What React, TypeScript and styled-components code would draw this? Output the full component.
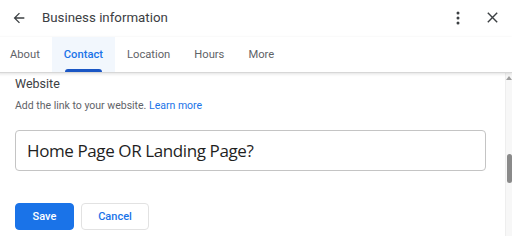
import styled, { createGlobalStyle } from "styled-components";

const Global = createGlobalStyle`
  html, body {
    margin: 0;
    padding: 0;
    background: #ffffff;
    font-family: Roboto, "Liberation Sans", sans-serif;
  }
  * { box-sizing: border-box; }
`;

const Page = styled.div`
  width: 512px;
  height: 236px;
  display: flex;
  flex-direction: column;
  overflow: hidden;
  background: #fff;
`;

const Header = styled.div`
  height: 37px;
  flex-shrink: 0;
  display: flex;
  align-items: center;
  padding: 0 14px 2px 11px;
`;

const Title = styled.div`
  flex: 1;
  margin-left: 15px;
  font-size: 13.3px;
  color: #3c4043;
`;

const IconBtn = styled.div<{ $gap?: number }>`
  display: flex;
  align-items: center;
  justify-content: center;
  margin-left: ${(p) => p.$gap ?? 0}px;
`;

const Tabs = styled.div`
  height: 36px;
  flex-shrink: 0;
  display: flex;
  margin-left: -2px;
  border-bottom: 1px solid #d7d7d7;
  box-shadow: 0 1px 3px rgba(0, 0, 0, 0.12);
  position: relative;
  z-index: 1;
`;

const Tab = styled.div<{ $active?: boolean }>`
  position: relative;
  display: flex;
  align-items: center;
  padding: 0 12px;
  font-size: 11.2px;
  color: ${(p) => (p.$active ? "#1a73e8" : "#5f6368")};
  background: ${(p) => (p.$active ? "#f2f7fd" : "transparent")};
  font-weight: ${(p) => (p.$active ? 500 : 400)};
`;

const Underline = styled.span`
  position: absolute;
  left: 13px;
  right: 13px;
  bottom: 0;
  height: 3px;
  border-radius: 3px 3px 0 0;
  background: #1a56c4;
`;

const Body = styled.div`
  flex: 1;
  display: flex;
  min-height: 0;
`;

const Content = styled.div`
  flex: 1;
  padding: 3px 19px 0 15px;
`;

const Label = styled.div`
  font-size: 12.5px;
  color: #3c4043;
  line-height: 16px;
`;

const Help = styled.div`
  margin-top: 7px;
  font-size: 10.5px;
  color: #5f6368;
  line-height: 14px;
  a {
    color: #1a73e8;
    text-decoration: none;
  }
`;

const Field = styled.div`
  margin-top: 17px;
  height: 41px;
  border: 1px solid #c4c4c4;
  border-radius: 4px;
  display: flex;
  align-items: center;
  padding-left: 11px;
  font-family: "Open Sans", "Liberation Sans", sans-serif;
  font-size: 17px;
  letter-spacing: -0.4px;
  color: #1f1f1f;
`;

const Actions = styled.div`
  margin-top: 32px;
  display: flex;
  gap: 7px;
`;

const Button = styled.div<{ $primary?: boolean }>`
  height: 27px;
  width: ${(p) => (p.$primary ? 59 : 68)}px;
  border-radius: 4px;
  display: flex;
  align-items: center;
  justify-content: center;
  font-size: 11px;
  font-weight: 500;
  background: ${(p) => (p.$primary ? "#1a73e8" : "#fff")};
  color: ${(p) => (p.$primary ? "#fff" : "#1a73e8")};
  border: 1px solid ${(p) => (p.$primary ? "#1a73e8" : "#e2e2e2")};
`;

const Scrollbar = styled.div`
  width: 7px;
  background: #f7f7f7;
  border-left: 1px solid #eeeeee;
  display: flex;
  flex-direction: column;
  align-items: center;
  padding-top: 3px;
`;

const Arrow = styled.div`
  width: 0;
  height: 0;
  border-left: 3px solid transparent;
  border-right: 3px solid transparent;
  border-bottom: 4px solid #9e9e9e;
`;

const Thumb = styled.div`
  margin-top: 74px;
  width: 5px;
  height: 29px;
  border-radius: 3px;
  background: #8a8a8a;
`;

export default function App() {
  return (
    <>
      <Global />
      <Page>
        <Header>
          <svg width="16" height="16" viewBox="0 0 24 24">
            <path
              d="M20 11H7.83l5.59-5.59L12 4l-8 8 8 8 1.41-1.41L7.83 13H20v-2z"
              fill="#3c4043"
            />
          </svg>
          <Title>Business information</Title>
          <IconBtn>
            <svg width="4" height="14" viewBox="0 0 4 14">
              <circle cx="2" cy="2" r="1.5" fill="#3c4043" />
              <circle cx="2" cy="7" r="1.5" fill="#3c4043" />
              <circle cx="2" cy="12" r="1.5" fill="#3c4043" />
            </svg>
          </IconBtn>
          <IconBtn $gap={27}>
            <svg width="11" height="11" viewBox="0 0 11 11">
              <path d="M0.8 0.8L10.2 10.2M10.2 0.8L0.8 10.2" stroke="#3c4043" strokeWidth="1.4" />
            </svg>
          </IconBtn>
        </Header>
        <Tabs>
          <Tab>About</Tab>
          <Tab $active>
            Contact
            <Underline />
          </Tab>
          <Tab>Location</Tab>
          <Tab>Hours</Tab>
          <Tab>More</Tab>
        </Tabs>
        <Body>
          <Content>
            <Label>Website</Label>
            <Help>
              Add the link to your website. <a>Learn more</a>
            </Help>
            <Field>Home Page OR Landing Page?</Field>
            <Actions>
              <Button $primary>Save</Button>
              <Button>Cancel</Button>
            </Actions>
          </Content>
          <Scrollbar>
            <Arrow />
            <Thumb />
          </Scrollbar>
        </Body>
      </Page>
    </>
  );
}
